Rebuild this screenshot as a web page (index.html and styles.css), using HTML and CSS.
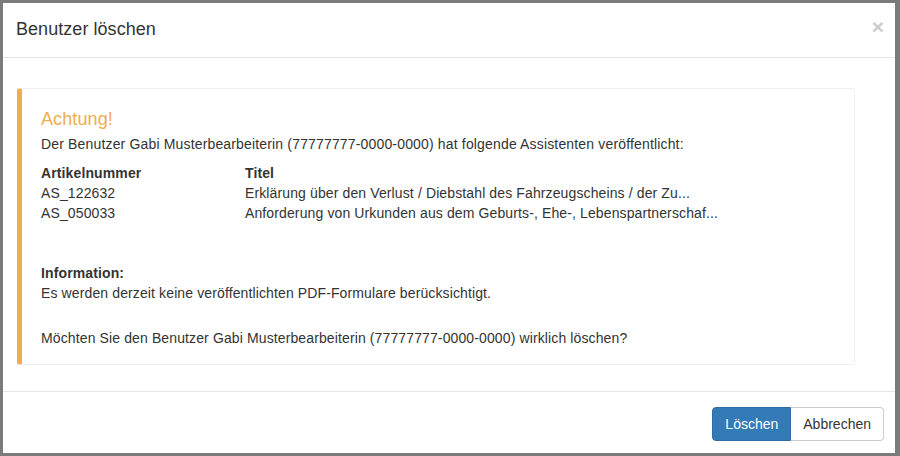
FILE: index.html
```html
<!DOCTYPE html>
<html lang="de">
<head>
<meta charset="utf-8">
<title>Benutzer löschen</title>
<link rel="stylesheet" href="styles.css">
</head>
<body>
<div class="modal">
  <div class="modal-header">
    <h4 class="modal-title">Benutzer löschen</h4>
    <button class="close" type="button" aria-label="Schließen">×</button>
  </div>
  <div class="modal-body">
    <div class="callout">
      <h4 class="callout-title">Achtung!</h4>
      <p class="lead-line">Der Benutzer Gabi Musterbearbeiterin (77777777-0000-0000) hat folgende Assistenten veröffentlicht:</p>
      <table class="list">
        <thead>
          <tr><th class="col-id">Artikelnummer</th><th>Titel</th></tr>
        </thead>
        <tbody>
          <tr><td class="col-id">AS_122632</td><td>Erklärung über den Verlust / Diebstahl des Fahrzeugscheins / der Zu...</td></tr>
          <tr><td class="col-id">AS_050033</td><td>Anforderung von Urkunden aus dem Geburts-, Ehe-, Lebenspartnerschaf...</td></tr>
        </tbody>
      </table>
      <p class="info"><strong>Information:</strong><br>Es werden derzeit keine veröffentlichten PDF-Formulare berücksichtigt.</p>
      <p class="question">Möchten Sie den Benutzer Gabi Musterbearbeiterin (77777777-0000-0000) wirklich löschen?</p>
    </div>
  </div>
  <div class="modal-footer">
    <div class="btn-group">
      <button class="btn btn-primary" type="button">Löschen</button>
      <button class="btn btn-default" type="button">Abbrechen</button>
    </div>
  </div>
</div>
</body>
</html>
```

FILE: styles.css
```css
* {
  box-sizing: border-box;
}

html,
body {
  height: 100%;
}

body {
  margin: 0;
  padding: 3px 5px 3px 3px;
  background: #7b7b7b;
  font-family: "Liberation Sans", Arial, sans-serif;
  font-size: 14px;
  line-height: 20px;
  color: #333;
}

.modal {
  height: 100%;
  background: #fff;
  display: flex;
  flex-direction: column;
}

/* header with title and close cross */
.modal-header {
  display: flex;
  justify-content: space-between;
  align-items: flex-start;
  padding: 14px 11px 16px 13px;
  border-bottom: 1px solid #e5e5e5;
}

.modal-title {
  margin: 0;
  font-size: 18px;
  font-weight: normal;
  line-height: 24px;
  letter-spacing: 0.05px;
}

.close {
  margin: 0;
  padding: 0;
  border: 0;
  background: none;
  font-family: "Liberation Sans", Arial, sans-serif;
  font-size: 21px;
  font-weight: bold;
  line-height: 20px;
  color: #000;
  opacity: 0.2;
  cursor: pointer;
}

/* body with the warning callout */
.modal-body {
  flex: 1;
  padding: 15px 0 15px 14px;
}

.callout {
  margin: 15px 40px 10px 0;
  padding: 20px 20px 16px 19px;
  border: 1px solid #eee;
  border-left: 5px solid #f0ad4e;
  border-radius: 3px;
  letter-spacing: 0.12px;
}

.callout .lead-line {
  letter-spacing: 0.16px;
}

.callout-title {
  margin: 0 0 5px;
  font-size: 18px;
  font-weight: normal;
  line-height: 20px;
  color: #f0ad4e;
  letter-spacing: 0.1px;
}

.callout p {
  margin: 0;
}

.list {
  margin-top: 9px;
  border-collapse: collapse;
  border-spacing: 0;
}

.list th,
.list td {
  padding: 0;
  text-align: left;
  vertical-align: top;
  line-height: 20px;
}

.list th {
  font-weight: bold;
}

.list .col-id {
  width: 204px;
}

.callout .info {
  margin-top: 40px;
}

.callout .question {
  margin-top: 25px;
}

/* footer buttons */
.modal-footer {
  display: flex;
  justify-content: flex-end;
  padding: 15px 11px 12px 15px;
  border-top: 1px solid #e5e5e5;
}

.btn-group {
  display: flex;
}

.btn {
  margin: 0;
  padding: 6px 12px;
  height: 34px;
  font-family: "Liberation Sans", Arial, sans-serif;
  font-size: 14px;
  line-height: 20px;
  border: 1px solid transparent;
  cursor: pointer;
}

.btn-primary {
  color: #fff;
  background: #337ab7;
  border-color: #2e6da4;
  border-radius: 4px 0 0 4px;
}

.btn-default {
  color: #333;
  background: #fff;
  border-color: #ccc;
  border-left-width: 0;
  border-radius: 0 4px 4px 0;
}
```
